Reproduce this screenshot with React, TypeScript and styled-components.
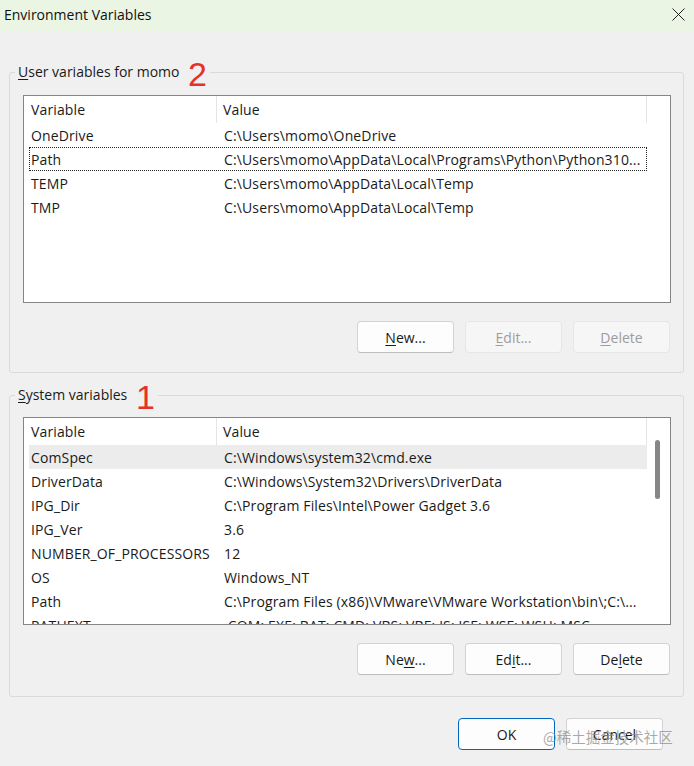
import React from "react";
import styled, { createGlobalStyle } from "styled-components";

const Global = createGlobalStyle`
  html, body { margin: 0; padding: 0; background: #f0f0f0; }
  body { font-family: "Open Sans", "Noto Sans", sans-serif; font-size: 14px; color: #1a1a1a; }
  * { box-sizing: border-box; }
`;

const Dialog = styled.div`
  width: 694px;
  height: 766px;
  background: #f0f0f0;
  display: flex;
  flex-direction: column;
  position: relative;
  overflow: hidden;
`;

const TitleBar = styled.div`
  height: 32px;
  flex: none;
  background: #eaf5e3;
  display: flex;
  align-items: center;
  justify-content: space-between;
  padding: 0 9px 4px 4px;
  font-size: 14px;
  color: #111;
`;

const CloseIcon = styled.svg`
  width: 13px;
  height: 13px;
  display: block;
`;

const Body = styled.div`
  flex: 1;
  display: flex;
  flex-direction: column;
  padding: 30px 10px 0 9px;
`;

const Group = styled.fieldset<{ $bottom: number; $top?: number; $padTop: number }>`
  margin: ${(p) => p.$top ?? 0}px 0 0 0;
  min-width: 0;
  border: 1px solid #dadada;
  border-radius: 3px;
  padding: ${(p) => p.$padTop}px 12px ${(p) => p.$bottom}px 13px;
`;

const Legend = styled.legend`
  margin-left: -8px;
  padding: 0 3px 0 3px;
  height: 20px;
  line-height: 20px;
  font-size: 14px;
  white-space: nowrap;
`;

const RedMark = styled.span`
  font-family: "Liberation Sans", Arial, sans-serif;
  font-size: 34px;
  line-height: 20px;
  color: #e8302a;
  margin-left: 5px;
  vertical-align: -9px;
`;

const U = styled.span`
  text-decoration: underline;
  text-underline-offset: 2px;
`;

const ListBox = styled.div`
  height: 208px;
  border: 1px solid #858585;
  background: #fff;
  display: flex;
  overflow: hidden;
`;

const ListMain = styled.div`
  flex: 1;
  min-width: 0;
  display: flex;
  flex-direction: column;
  overflow: hidden;
  letter-spacing: 0.13px;
`;

const Header = styled.div`
  height: 27px;
  flex: none;
  display: grid;
  grid-template-columns: 193px 1fr;
`;

const HeadCell = styled.div<{ $pad: number }>`
  padding-left: ${(p) => p.$pad}px;
  display: flex;
  align-items: center;
  border-right: 1px solid #e5e5e5;
`;

const Row = styled.div<{ $selected?: boolean; $focused?: boolean }>`
  height: 24px;
  flex: none;
  margin-left: 5px;
  display: grid;
  grid-template-columns: 193px 1fr;
  align-items: center;
  background: ${(p) => (p.$selected ? "#ececec" : "transparent")};
  outline: ${(p) => (p.$focused ? "1px dotted #222" : "none")};
  outline-offset: -1px;
`;

const Cell = styled.div`
  padding: 0 2px;
  white-space: nowrap;
  overflow: hidden;
`;

const Gutter = styled.div`
  width: 23px;
  flex: none;
  padding: 22px 0 0 8px;
`;

const Thumb = styled.div`
  width: 5px;
  height: 59px;
  border-radius: 3px;
  background: #868686;
`;

const ButtonRow = styled.div<{ $top: number; $right?: number }>`
  display: flex;
  justify-content: flex-end;
  gap: 11px;
  margin-top: ${(p) => p.$top}px;
  padding-right: ${(p) => p.$right ?? 1}px;
`;

const Button = styled.button<{ $primary?: boolean }>`
  width: 97px;
  height: 32px;
  font-family: inherit;
  font-size: 14px;
  color: #1a1a1a;
  background: #fdfdfd;
  border: 1px solid ${(p) => (p.$primary ? "#0067c0" : "#d3d3d3")};
  border-bottom-color: ${(p) => (p.$primary ? "#0067c0" : "#bdbdbd")};
  border-radius: 4px;
  padding: 0;
  &:disabled {
    background: #f6f6f6;
    border-color: #e6e6e6;
    color: #9d9d9d;
  }
`;

const Watermark = styled.div`
  position: absolute;
  left: 543px;
  top: 726px;
  font-family: "Noto Sans CJK SC", sans-serif;
  font-size: 14.5px;
  color: rgba(140, 140, 140, 0.75);
  pointer-events: none;
  white-space: nowrap;
`;

type Item = [string, string];

const userVars: Item[] = [
  ["OneDrive", "C:\\Users\\momo\\OneDrive"],
  ["Path", "C:\\Users\\momo\\AppData\\Local\\Programs\\Python\\Python310..."],
  ["TEMP", "C:\\Users\\momo\\AppData\\Local\\Temp"],
  ["TMP", "C:\\Users\\momo\\AppData\\Local\\Temp"],
];

const sysVars: Item[] = [
  ["ComSpec", "C:\\Windows\\system32\\cmd.exe"],
  ["DriverData", "C:\\Windows\\System32\\Drivers\\DriverData"],
  ["IPG_Dir", "C:\\Program Files\\Intel\\Power Gadget 3.6"],
  ["IPG_Ver", "3.6"],
  ["NUMBER_OF_PROCESSORS", "12"],
  ["OS", "Windows_NT"],
  ["Path", "C:\\Program Files (x86)\\VMware\\VMware Workstation\\bin\\;C:\\..."],
  ["PATHEXT", ".COM;.EXE;.BAT;.CMD;.VBS;.VBE;.JS;.JSE;.WSF;.WSH;.MSC"],
];

function VarList({
  items,
  selected,
  focused,
  scroll,
}: {
  items: Item[];
  selected?: number;
  focused?: number;
  scroll?: boolean;
}) {
  return (
    <ListBox>
      <ListMain>
        <Header>
          <HeadCell $pad={7}>Variable</HeadCell>
          <HeadCell $pad={6}>Value</HeadCell>
        </Header>
        {items.map(([k, v], i) => (
          <Row key={k + i} $selected={i === selected} $focused={i === focused}>
            <Cell>{k}</Cell>
            <Cell>{v}</Cell>
          </Row>
        ))}
      </ListMain>
      <Gutter>{scroll && <Thumb />}</Gutter>
    </ListBox>
  );
}

export default function App() {
  return (
    <Dialog>
      <Global />
      <TitleBar>
        <span>Environment Variables</span>
        <CloseIcon viewBox="0 0 13 13">
          <path d="M0.5 0.5 L12.5 12.5 M12.5 0.5 L0.5 12.5" stroke="#222" strokeWidth="1" fill="none" />
        </CloseIcon>
      </TitleBar>
      <Body>
        <Group $bottom={19} $padTop={13}>
          <Legend>
            <U>U</U>ser variables for momo <RedMark>2</RedMark>
          </Legend>
          <VarList items={userVars} focused={1} />
          <ButtonRow $top={18}>
            <Button>
              <U>N</U>ew...
            </Button>
            <Button disabled>
              <U>E</U>dit...
            </Button>
            <Button disabled>
              <U>D</U>elete
            </Button>
          </ButtonRow>
        </Group>
        <Group $bottom={21} $top={12} $padTop={12}>
          <Legend>
            <U>S</U>ystem variables <RedMark>1</RedMark>
          </Legend>
          <VarList items={sysVars} selected={0} scroll />
          <ButtonRow $top={18}>
            <Button>
              Ne<U>w</U>...
            </Button>
            <Button>
              Ed<U>i</U>t...
            </Button>
            <Button>
              De<U>l</U>ete
            </Button>
          </ButtonRow>
        </Group>
        <ButtonRow $top={21} $right={21}>
          <Button $primary>OK</Button>
          <Button>Cancel</Button>
        </ButtonRow>
      </Body>
      <Watermark>@稀土掘金技术社区</Watermark>
    </Dialog>
  );
}
